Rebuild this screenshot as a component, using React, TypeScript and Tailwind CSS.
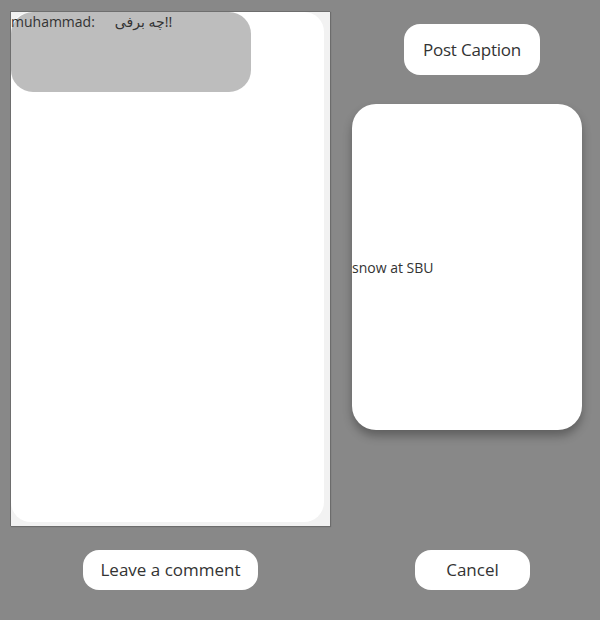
export default function App() {
  return (
    <div className="w-[600px] h-[620px] bg-[#888888] font-['Open_Sans','Noto_Sans',sans-serif] text-[#333]">
      <div className="flex">
        {/* comments list */}
        <div className="ml-[10px] mt-[11px] w-[320px] h-[515px] bg-[#f2f2f2] border-l border-t border-[#6e6e6e] shadow-[1px_1px_1px_rgba(0,0,0,0.2)] pr-[6px] pb-[4px]">
          <div className="h-full bg-white rounded-[20px]">
            <div className="w-[240px] h-[80px] bg-[#bdbdbd] rounded-[22px] flex items-start text-[14px] leading-[22px]">
              <span className="-mt-[1px]">muhammad:</span>
              <span className="ml-[20px] -mt-[1px] font-['Noto_Sans','DejaVu_Sans',sans-serif] text-[14px]">چه برفی!!</span>
            </div>
          </div>
        </div>

        {/* caption */}
        <div className="ml-[22px] w-[230px] flex flex-col items-center">
          <div className="mt-[24px] ml-[10px] w-[136px] h-[51px] bg-white rounded-[16px] flex items-center justify-center text-[17px] tracking-[-0.2px]">
            Post Caption
          </div>
          <div className="mt-[29px] w-[230px] h-[326px] bg-white rounded-[24px] shadow-[0_6px_10px_rgba(0,0,0,0.3)] flex items-center text-[14px]">
            snow at SBU
          </div>
        </div>
      </div>

      <div className="flex mt-[24px]">
        <div className="ml-[83px] w-[175px] h-[40px] bg-white rounded-[16px] flex items-center justify-center text-[17px]">
          Leave a comment
        </div>
        <div className="ml-[157px] w-[115px] h-[40px] bg-white rounded-[16px] flex items-center justify-center text-[17px]">
          Cancel
        </div>
      </div>
    </div>
  );
}
